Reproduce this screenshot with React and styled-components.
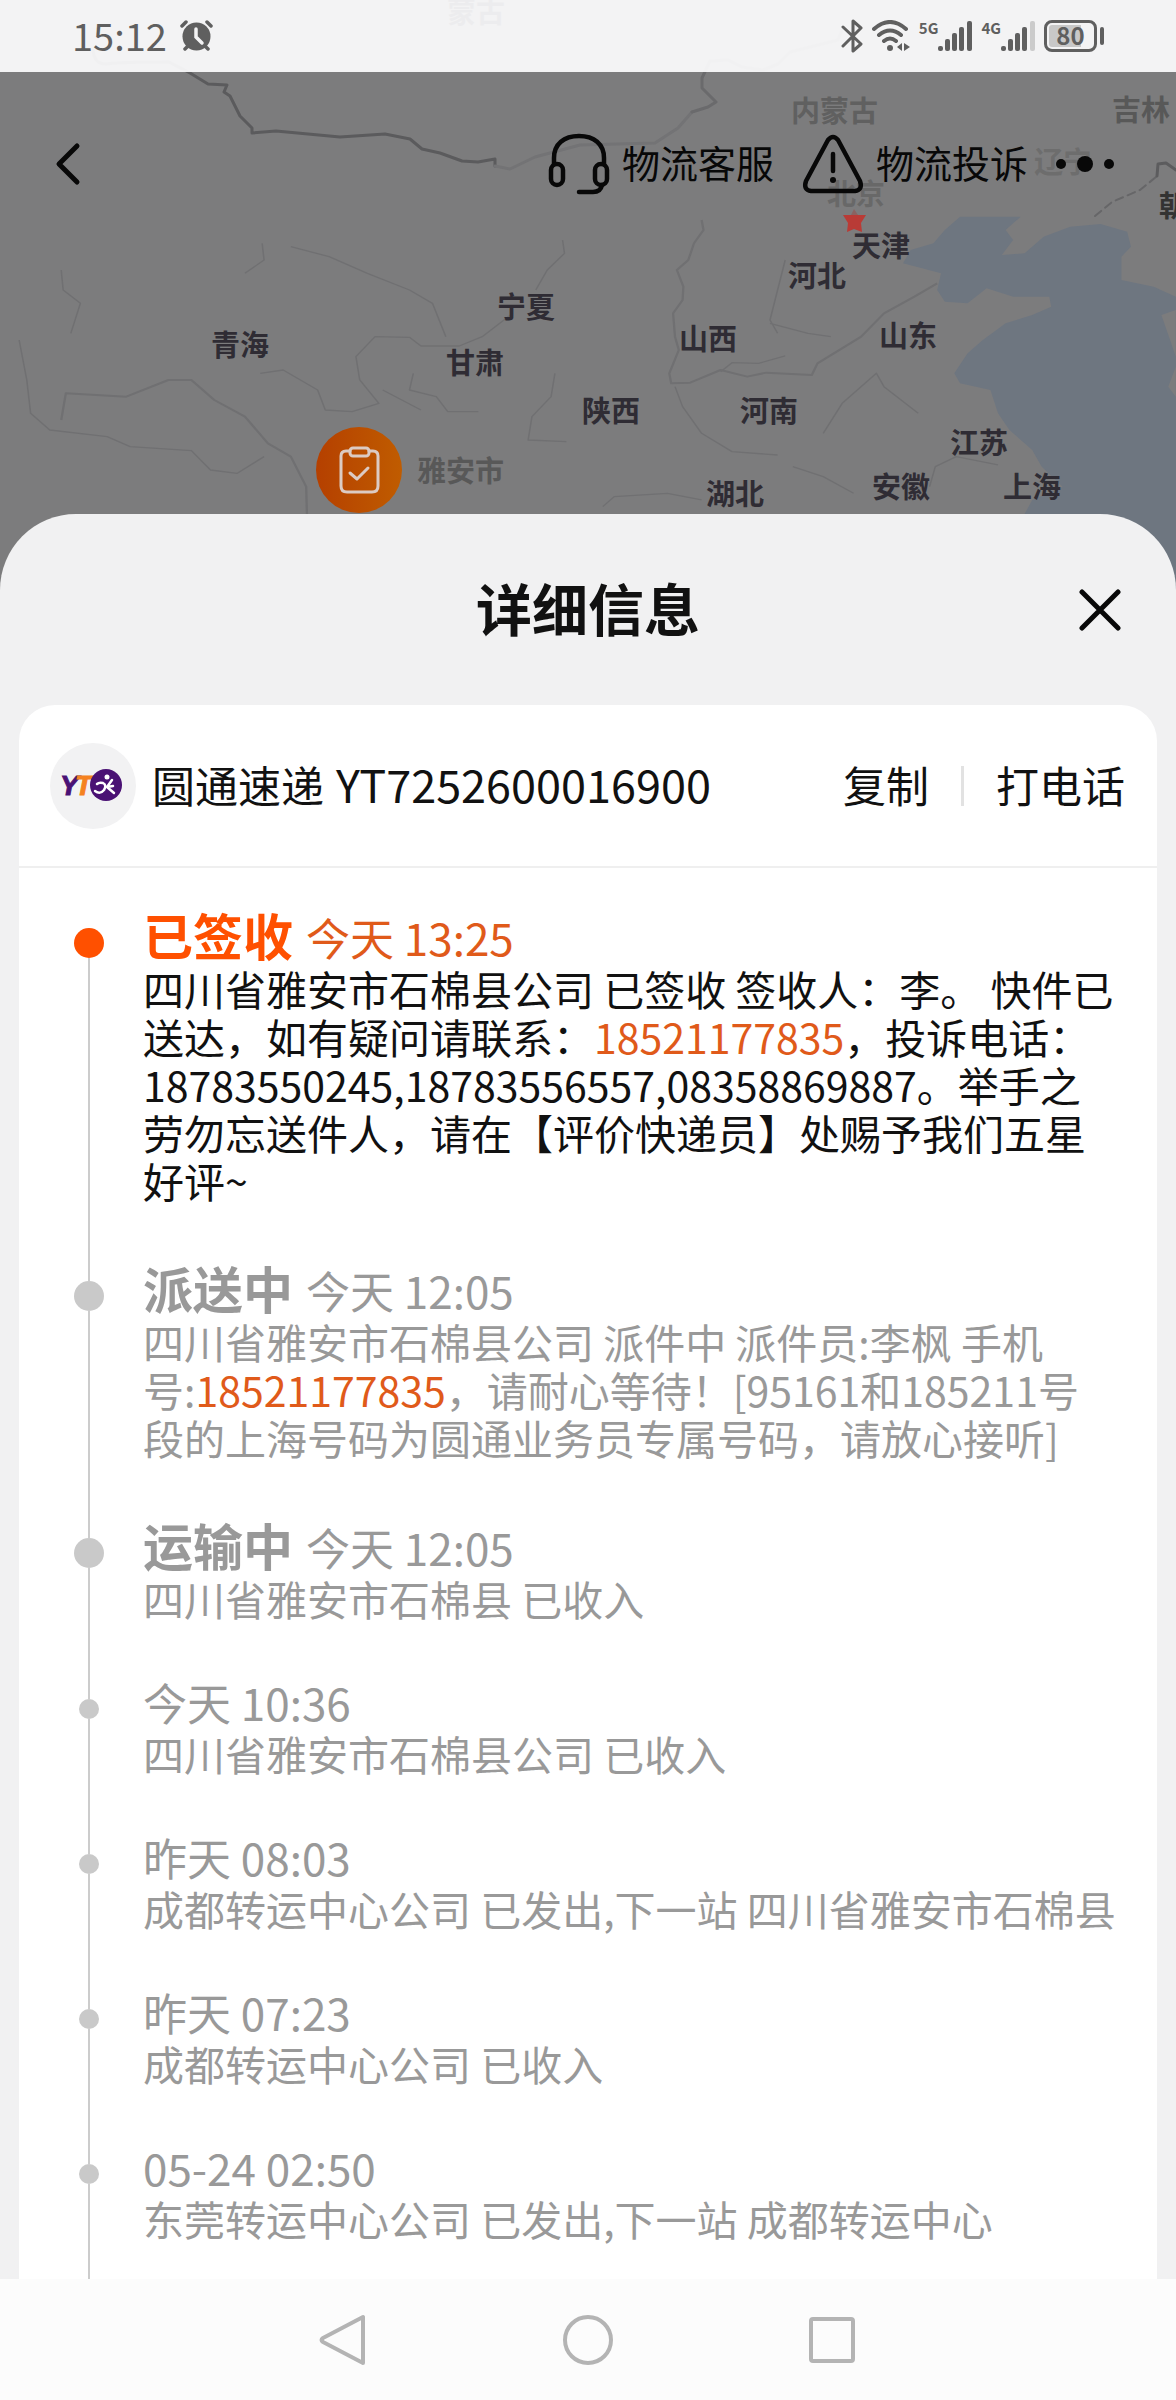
import React from "react";
import styled, { createGlobalStyle } from "styled-components";

const INK = "#111111";
const MUTED = "#999999";
const ACCENT = "#ff5000";
const LINK = "#e05a1a";

const GlobalStyle = createGlobalStyle`
  *, *::before, *::after { box-sizing: border-box; }
  body {
    margin: 0;
    background: #f1f1f2;
    color: ${INK};
    font-family: "Noto Sans CJK SC", "Noto Sans", sans-serif;
    overflow-x: hidden;
  }
  button {
    margin: 0;
    padding: 0;
    border: 0;
    background: none;
    color: inherit;
    font: inherit;
    cursor: pointer;
  }
  h1, h2, p, ol { margin: 0; padding: 0; }
  svg { display: block; flex: none; }
`;

const Screen = styled.div`
  display: flex;
  flex-direction: column;
  min-height: 100vh;
`;

const Backdrop = styled.section`
  position: relative;
  height: 590px;
  overflow: hidden;
  background: #7c7c7d;
`;

const MapDrawing = styled.svg`
  position: absolute;
  top: 0;
  left: 0;
`;

const Place = styled.span`
  position: absolute;
  left: ${(p) => p.$x}px;
  top: ${(p) => p.$y}px;
  margin-top: -22px;
  font-size: 29px;
  line-height: 40px;
  font-weight: 700;
  white-space: nowrap;
  color: ${(p) => p.$color || "#2f2c34"};
`;

const StatusBar = styled.div`
  position: relative;
  display: flex;
  align-items: center;
  justify-content: space-between;
  height: 72px;
  padding: 0 72px;
  background: rgba(253, 253, 254, 0.92);
  color: #5f5f5f;
`;

const StatusGroup = styled.div`
  display: flex;
  align-items: center;
  gap: ${(p) => p.$gap}px;
`;

const Clock = styled.time`
  padding-bottom: 2px;
  font-size: 38px;
  line-height: 48px;
`;

const Signal = styled.span`
  display: flex;
  align-items: flex-start;
`;

const SignalLabel = styled.span`
  font-size: 15px;
  line-height: 16px;
  font-weight: 700;
`;

const Battery = styled.span`
  display: flex;
  align-items: center;
  gap: 3px;

  &::after {
    content: "";
    width: 4px;
    height: 18px;
    border-radius: 2px;
    background: #5f5f5f;
  }
`;

const BatteryLevel = styled.span`
  width: 53px;
  height: 32px;
  border: 3px solid #5f5f5f;
  border-radius: 8px;
  background: linear-gradient(90deg, #c8c8c8 75%, transparent 75%) content-box;
  padding: 2px;
  font-size: 24px;
  line-height: 20px;
  font-weight: 700;
  text-align: center;
`;

const TopBar = styled.header`
  position: relative;
  display: flex;
  align-items: center;
  height: 184px;
  padding: 0 60px 0 52px;
  color: #080808;
`;

const TopActions = styled.div`
  display: flex;
  align-items: center;
  gap: 28px;
  margin-left: auto;
`;

const TopAction = styled.button`
  display: flex;
  align-items: center;
  gap: 12px;
  font-size: 38px;
  line-height: 56px;
`;

const TopLabel = styled.span`
  padding-bottom: 4px;
`;

const IconButton = styled.button`
  display: grid;
  place-items: center;
`;

const Sheet = styled.main`
  position: relative;
  flex: 1;
  display: flex;
  flex-direction: column;
  margin-top: -76px;
  padding: 0 19px;
  border-radius: 76px 76px 0 0;
  background: #f1f1f2;
`;

const SheetHeader = styled.div`
  display: grid;
  grid-template-columns: 1fr auto 1fr;
  align-items: center;
  height: 191px;
  padding: 0 36px;
`;

const Title = styled.h1`
  grid-column: 2;
  padding-bottom: 6px;
  font-size: 56px;
  line-height: 80px;
  font-weight: 700;
`;

const CloseButton = styled(IconButton)`
  justify-self: end;
`;

const Card = styled.section`
  flex: 1;
  border-radius: 36px 36px 0 0;
  background: #ffffff;
`;

const Carrier = styled.div`
  display: flex;
  align-items: center;
  height: 163px;
  padding: 0 32px 0 31px;
  border-bottom: 2px solid #efefef;
  font-size: 43px;
  line-height: 64px;
`;

const CarrierName = styled.h2`
  display: flex;
  align-items: baseline;
  gap: 12px;
  margin-left: 16px;
  padding-bottom: 4px;
  font-size: inherit;
  font-weight: 400;
`;

const TrackingNumber = styled.span`
  font-size: 45px;
`;

const CarrierActions = styled.div`
  display: flex;
  align-items: center;
  gap: 32px;
  margin-left: auto;
`;

const CarrierAction = styled.button`
  padding-bottom: 4px;
`;

const Divider = styled.span`
  width: 3px;
  height: 40px;
  background: #e2e2e2;
`;

const Timeline = styled.ol`
  padding: 36px 40px 0 54px;
  list-style: none;
`;

const Entry = styled.li`
  display: flex;
  gap: 38px;
  color: ${(p) => (p.$current ? INK : MUTED)};
`;

const Rail = styled.div`
  display: flex;
  flex: none;
  flex-direction: column;
  align-items: center;
  width: 32px;

  &::before {
    content: "";
    width: 2px;
    height: 24px;
    background: ${(p) => (p.$first ? "transparent" : "#cccccc")};
  }
  &::after {
    content: "";
    flex: 1;
    width: 2px;
    background: #cccccc;
  }
`;

const Dot = styled.span`
  width: ${(p) => (p.$large ? 30 : 20)}px;
  height: ${(p) => (p.$large ? 30 : 20)}px;
  border-radius: 50%;
  background: ${(p) => (p.$current ? ACCENT : "#c9c9c9")};
`;

const EntryBody = styled.div`
  flex: 1;
  min-width: 0;
  padding-bottom: ${(p) => (p.$last ? 37 : 53)}px;
`;

const EntryHeader = styled.div`
  display: flex;
  align-items: baseline;
  gap: 13px;
  height: ${(p) => (p.$titled ? 60 : 54)}px;
  line-height: ${(p) => (p.$titled ? 60 : 54)}px;
  color: ${(p) => (p.$current ? LINK : MUTED)};
`;

const Stage = styled.strong`
  font-size: 50px;
  font-weight: 700;
  color: ${(p) => (p.$current ? ACCENT : MUTED)};
`;

const Stamp = styled.time`
  font-size: 44px;
`;

const Message = styled.p`
  font-size: 41px;
  line-height: 48px;
`;

const Phone = styled.a`
  color: ${LINK};
  text-decoration: none;
`;

const NavBar = styled.nav`
  display: flex;
  align-items: center;
  justify-content: center;
  gap: 184px;
  height: 122px;
  background: #fcfcfc;
  color: #b4b4b4;
`;

const places = [
  ["蒙古", 447, 12],
  ["青海", 211, 345],
  ["宁夏", 497, 307],
  ["甘肃", 446, 363],
  ["陕西", 582, 411],
  ["天津", 852, 246],
  ["河北", 788, 276],
  ["山西", 679, 339],
  ["山东", 879, 336],
  ["河南", 740, 411],
  ["江苏", 950, 443],
  ["安徽", 872, 487],
  ["上海", 1003, 487],
  ["湖北", 706, 494],
  ["雅安市", 417, 471, "#585858"],
  ["北京", 827, 194, "#686868"],
  ["内蒙古", 791, 111, "#606060"],
  ["吉林", 1112, 110, "#585858"],
  ["辽宁", 1034, 162, "#6d6d6d"],
  ["朝", 1159, 206, "#333333"],
];

const entries = [
  {
    stage: "已签收",
    time: "今天 13:25",
    text: (
      <>
        四川省雅安市石棉县公司 已签收 签收人：李。 快件已送达，如有疑问请联系：
        <Phone href="tel:18521177835">18521177835</Phone>
        ，投诉电话：18783550245,18783556557,08358869887。举手之劳勿忘送件人，请在【评价快递员】处赐予我们五星好评~
      </>
    ),
  },
  {
    stage: "派送中",
    time: "今天 12:05",
    text: (
      <>
        四川省雅安市石棉县公司 派件中 派件员:李枫 手机号:
        <Phone href="tel:18521177835">18521177835</Phone>
        ，请耐心等待！[95161和185211号段的上海号码为圆通业务员专属号码，请放心接听]
      </>
    ),
  },
  { stage: "运输中", time: "今天 12:05", text: "四川省雅安市石棉县 已收入" },
  { time: "今天 10:36", text: "四川省雅安市石棉县公司 已收入" },
  { time: "昨天 08:03", text: "成都转运中心公司 已发出,下一站 四川省雅安市石棉县" },
  { time: "昨天 07:23", text: "成都转运中心公司 已收入" },
  { time: "05-24 02:50", text: "东莞转运中心公司 已发出,下一站 成都转运中心" },
];

function MapArt() {
  return (
    <MapDrawing width="1176" height="590" viewBox="0 0 1176 590" fill="none" aria-hidden="true">
      <defs>
        <linearGradient id="pin" x1="0" y1="0" x2="1" y2="0">
          <stop offset="0" stopColor="#b54000" />
          <stop offset="1" stopColor="#c05c00" />
        </linearGradient>
      </defs>
      <g transform="translate(580 200) scale(.38 .3333)">
        <path
          fill="#6e7680"
          d="M1000 50H1160L1120 90 1140 120 1110 165 1170 160 1220 110 1290 80 1370 72 1440 95 1450 140 1425 170 1425 240 1510 260 1568 290V1200H1200L1170 942 1190 900 1270 860 1215 800 1190 750 1130 690 1100 640 1080 570 1000 550 985 520 1020 460 1060 420 1120 370 1190 345 1240 320 1235 290 1140 290 1070 265 1020 310 960 305 940 270 950 220 850 190 870 150 930 130 960 90Z"
        />
        <path fill="#7c7c7d" d="M1530 345 1568 330V470L1550 410ZM1568 500 1548 560 1568 590Z" />
      </g>
      <g stroke="#707072" strokeWidth="2" strokeLinejoin="round">
        <g transform="translate(580 200) scale(.38 .3333)">
          <path d="M320 60 325 90 300 130 285 180 255 210 272 260 270 300 245 340 250 410 260 450 235 520 240 550 290 548 370 510 440 530 490 518 610 525 625 490 740 410 800 340 880 290 940 250" strokeWidth="6" />
          <path d="M370 515 400 488 470 490 540 468M540 180 500 360 520 400M500 370 600 400 660 410M250 560 270 620 320 700 400 755 520 765M60 920 90 890 230 880 320 900M920 860 935 800 990 770 1100 795M560 800 640 830 720 880M640 700 690 610 780 520 800 560 890 640" strokeWidth="4" />
        </g>
        <g transform="translate(0 240) scale(.3827 .3333)">
          <path d="M160 540 172 460 330 470 440 420 500 420 560 480 640 530 700 610 760 650 800 740 802 822" strokeWidth="6" />
          <path d="M680 400 740 390 830 450 850 510 920 515 990 490 940 420 930 350 980 290 1070 292 1100 318 1200 318 1260 290 1340 220M160 90 165 150 210 190 185 280M50 300 70 420 80 520 130 570 280 590 340 620 500 632 550 690 620 700 690 650M685 10 690 60 640 100M760 20 860 50 960 100 1070 150 1130 190 1165 290M1470 0 1475 40 1430 90 1400 150M1100 510 1000 450M1080 400 1070 450 1140 470 1170 515H1250M1450 400 1440 470 1390 530 1380 600 1480 605" strokeWidth="4" />
        </g>
      </g>
      <g strokeLinejoin="round" strokeLinecap="round">
        <path d="M93 50C94 60 98 64 106 64C120 62 150 62 169 62L190 73 208 84 227 85 224 92 230 96 240 116 252 128 252 133 276 131 340 137 385 134 410 139 422 149 440 153 462 161 478 162 495 159 495 166" stroke="#5b5b5d" strokeWidth="3" />
        <path d="M495 166 510 169 535 157 580 145 655 143 678 128 692 112" stroke="#737375" strokeWidth="3" />
        <path d="M842 30 838 40 790 52 778 64 763 70 742 67 728 60 710 61 702 78 702 88 716 102 708 107 692 112" stroke="#6a6a6c" strokeWidth="3" />
        <path d="M1095 216 1112 202 1140 190 1156 177" stroke="#666668" strokeWidth="2" strokeDasharray="8 5" />
        <path d="M1157 176 1158 164 1166 163 1176 170" stroke="#5c5c5e" strokeWidth="3" />
      </g>
      <path fill="#b93b36" d="M843 215H866L861 223 862 232 854 229 847 232 848 223Z" />
      <path fill="#8b6260" d="M851 215 854 209 858 215Z" />
      <circle cx="359" cy="470" r="43" fill="url(#pin)" />
      <g stroke="#dccbc3" strokeWidth="3" strokeLinecap="round" strokeLinejoin="round">
        <path d="M350 451H346Q341 451 341 456V486Q341 492 347 492H372Q378 492 378 486V456Q378 451 373 451H369" />
        <rect x="350" y="448" width="19" height="8" rx="3" />
        <path d="M350 473 357 479 368 468" />
      </g>
    </MapDrawing>
  );
}

function AlarmIcon() {
  return (
    <svg width="33" height="32" viewBox="0 0 33 32" fill="none" stroke="#5f5f5f" strokeLinecap="round" aria-hidden="true">
      <circle cx="16.500" cy="16.500" r="14" fill="#5f5f5f" stroke="none" />
      <path d="M2 6 6 2M31 6 27 2M5 29 8 26M28 29 25 26" strokeWidth="3.500" />
      <path d="M16 9V17L22 23" stroke="#f3f3f4" strokeWidth="3.500" />
    </svg>
  );
}

function BluetoothIcon() {
  return (
    <svg width="22" height="34" viewBox="0 0 22 34" fill="none" stroke="#5f5f5f" strokeWidth="3" strokeLinejoin="round" strokeLinecap="round" aria-hidden="true">
      <path d="M2 8 20 25 12 32V2L20 9 2 27" />
    </svg>
  );
}

function WifiIcon() {
  return (
    <svg width="38" height="32" viewBox="0 0 38 32" fill="none" stroke="#5f5f5f" strokeWidth="4" strokeLinecap="round" aria-hidden="true">
      <path d="M2 9Q18 -5 34 9M7 15Q18 6 29 15M12 21Q18 16 24 21" />
      <circle cx="18" cy="28" r="3" fill="#5f5f5f" stroke="none" />
      <path d="M30 23V31L25 27ZM32 23V31L38 27Z" fill="#5f5f5f" stroke="none" />
    </svg>
  );
}

function BarsIcon({ weak }) {
  return (
    <svg width="34" height="32" viewBox="0 0 34 32" fill="#5f5f5f" aria-hidden="true">
      <rect x="0" y="26" width="5" height="5" rx="2" />
      <rect x="7" y="19" width="5" height="12" rx="2" />
      <rect x="14" y="13" width="5" height="18" rx="2" />
      <rect x="21" y="7" width="5" height="24" rx="2" />
      <rect x="29" y="1" width="5" height="30" rx="2" fill={weak ? "#cbcbcb" : "#5f5f5f"} />
    </svg>
  );
}

function HeadsetIcon() {
  return (
    <svg width="62" height="62" viewBox="0 0 62 62" fill="none" stroke="currentColor" strokeWidth="4.500" strokeLinecap="round" aria-hidden="true">
      <path d="M6 31V25C6 11 16 3 31 3S56 11 56 25V31" />
      <rect x="3" y="31" width="12" height="21" rx="6" />
      <rect x="47" y="31" width="12" height="21" rx="6" />
      <path d="M54 52C53 57 50 59 45 59H31" />
    </svg>
  );
}

function WarningIcon() {
  return (
    <svg width="62" height="60" viewBox="0 0 62 60" fill="none" stroke="currentColor" strokeWidth="4.500" strokeLinecap="round" strokeLinejoin="round" aria-hidden="true">
      <path d="M26 6Q31 0 36 6L58 47Q61 56 53 57H9Q1 56 4 47Z" />
      <path d="M31 20V37" />
      <circle cx="31" cy="46" r="3" fill="currentColor" stroke="none" />
    </svg>
  );
}

function CarrierLogo() {
  return (
    <svg width="86" height="86" viewBox="0 0 86 86" role="img" aria-label="YTO">
      <circle cx="43" cy="43" r="43" fill="#f2f2f3" />
      <g fontFamily="Liberation Sans, Arial, sans-serif" fontWeight="700" fontStyle="italic" fontSize="28" strokeWidth="1">
        <text x="10" y="52" fill="#4a1174" stroke="#4a1174">Y</text>
        <text x="25" y="52" fill="#f58220" stroke="#f58220">T</text>
      </g>
      <circle cx="56" cy="42" r="16" fill="#4a1174" />
      <g fill="none" stroke="#fff" strokeWidth="2.500" strokeLinecap="round" strokeLinejoin="round">
        <path d="M45 48Q50 52 54 47Q57 42 53 40Q49 39 47 41" />
        <path d="M62 37 57 44 64 50M57 44 63 43" />
      </g>
      <circle cx="57" cy="34" r="2.500" fill="#fff" />
    </svg>
  );
}

export default function App() {
  return (
    <Screen>
      <GlobalStyle />
      <Backdrop>
        <MapArt />
        {places.map(([name, x, y, color]) => (
          <Place key={name} $x={x} $y={y} $color={color}>
            {name}
          </Place>
        ))}
        <StatusBar>
          <StatusGroup $gap={13}>
            <Clock>15:12</Clock>
            <AlarmIcon />
          </StatusGroup>
          <StatusGroup $gap={9}>
            <BluetoothIcon />
            <WifiIcon />
            <Signal>
              <SignalLabel>5G</SignalLabel>
              <BarsIcon />
            </Signal>
            <Signal>
              <SignalLabel>4G</SignalLabel>
              <BarsIcon weak />
            </Signal>
            <Battery>
              <BatteryLevel>80</BatteryLevel>
            </Battery>
          </StatusGroup>
        </StatusBar>
        <TopBar>
          <IconButton aria-label="返回">
            <svg width="32" height="44" viewBox="0 0 32 44" fill="none" stroke="currentColor" strokeWidth="5" strokeLinecap="round" strokeLinejoin="round">
              <path d="M25 4 7 22 25 40" />
            </svg>
          </IconButton>
          <TopActions>
            <TopAction>
              <HeadsetIcon />
              <TopLabel>物流客服</TopLabel>
            </TopAction>
            <TopAction>
              <WarningIcon />
              <TopLabel>物流投诉</TopLabel>
            </TopAction>
            <IconButton aria-label="更多">
              <svg width="60" height="18" viewBox="0 0 60 18" fill="currentColor">
                <circle cx="5" cy="9" r="5" />
                <circle cx="29" cy="9" r="8" />
                <circle cx="53" cy="9" r="5" />
              </svg>
            </IconButton>
          </TopActions>
        </TopBar>
      </Backdrop>

      <Sheet>
        <SheetHeader>
          <Title>详细信息</Title>
          <CloseButton aria-label="关闭">
            <svg width="42" height="42" viewBox="0 0 42 42" fill="none" stroke="#080808" strokeWidth="5" strokeLinecap="round">
              <path d="M3 3 39 39M39 3 3 39" />
            </svg>
          </CloseButton>
        </SheetHeader>
        <Card>
          <Carrier>
            <CarrierLogo />
            <CarrierName>
              圆通速递 <TrackingNumber>YT7252600016900</TrackingNumber>
            </CarrierName>
            <CarrierActions>
              <CarrierAction>复制</CarrierAction>
              <Divider />
              <CarrierAction>打电话</CarrierAction>
            </CarrierActions>
          </Carrier>
          <Timeline>
            {entries.map((entry, i) => {
              const current = i === 0;
              const titled = Boolean(entry.stage);
              return (
                <Entry key={i} $current={current}>
                  <Rail $first={current}>
                    <Dot $large={titled} $current={current} />
                  </Rail>
                  <EntryBody $last={i === entries.length - 1}>
                    <EntryHeader $titled={titled} $current={current}>
                      {titled && <Stage $current={current}>{entry.stage}</Stage>}
                      <Stamp>{entry.time}</Stamp>
                    </EntryHeader>
                    <Message>{entry.text}</Message>
                  </EntryBody>
                </Entry>
              );
            })}
          </Timeline>
        </Card>
      </Sheet>

      <NavBar aria-label="系统导航">
        <IconButton aria-label="返回上一页">
          <svg width="60" height="60" viewBox="0 0 60 60" fill="none" stroke="currentColor" strokeWidth="4" strokeLinejoin="round">
            <path d="M49 7V53L9 32Q6 30 9 28Z" />
          </svg>
        </IconButton>
        <IconButton aria-label="主屏幕">
          <svg width="60" height="60" viewBox="0 0 60 60" fill="none" stroke="currentColor" strokeWidth="4">
            <circle cx="30" cy="30" r="23" />
          </svg>
        </IconButton>
        <IconButton aria-label="最近任务">
          <svg width="60" height="60" viewBox="0 0 60 60" fill="none" stroke="currentColor" strokeWidth="4">
            <rect x="9" y="9" width="42" height="42" rx="2" />
          </svg>
        </IconButton>
      </NavBar>
    </Screen>
  );
}
